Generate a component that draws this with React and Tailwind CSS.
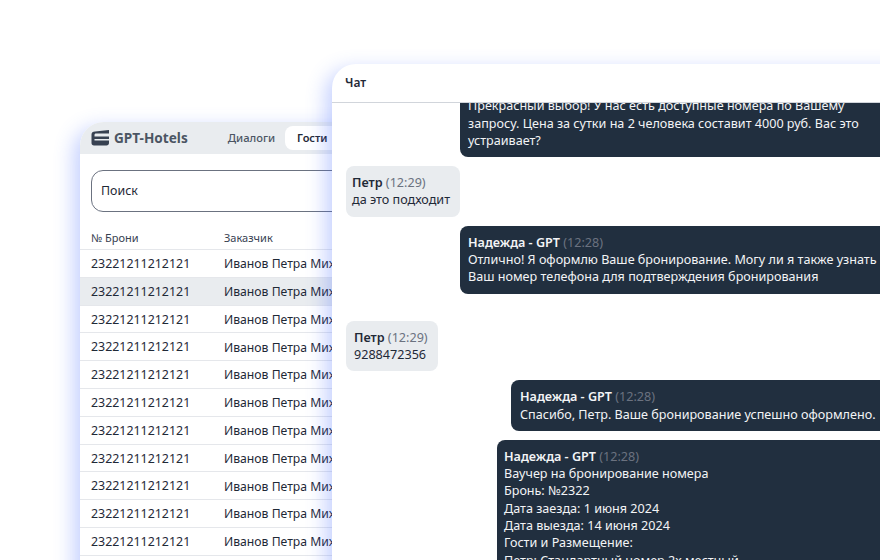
import React from "react";

const guests = Array.from({ length: 12 }, (_, i) => i);

const Logo = () => (
  <svg width="19" height="16" viewBox="0 0 19 16" className="shrink-0">
    <path d="M4 1.5L18 0V3.5H5C4 3.5 3.5 4 3.5 5V6.5H18V9H3.5V10.5H18V13C18 14.6 17 15.5 15.5 15.5H3C1.4 15.5 0.5 14.6 0.5 13V4.5C0.5 2.6 1.8 1.7 4 1.5Z" fill="#374151" />
  </svg>
);

const GuestRow = ({ active }) => (
  <div className={`flex h-[27.8px] shrink-0 items-center border-b border-[#e5e7eb] pl-[11px] pt-[2px] text-[#1f2937] ${active ? "bg-[#e9ecef]" : ""}`}>
    <span className="w-[133px] text-[12.4px]">23221211212121</span>
    <span className="whitespace-nowrap text-[12.2px]">Иванов Петра Михайловна</span>
  </div>
);

const GuestBubble = ({ time, text, className = "" }) => (
  <div className={`rounded-lg bg-[#e9ecef] py-2 text-[#1f2937] ${className}`}>
    <p>
      <b className="font-semibold">Петр</b> <span className="text-[#6b7280]">({time})</span>
    </p>
    <p>{text}</p>
  </div>
);

const BotBubble = ({ className = "", children }) => (
  <div className={`rounded-lg bg-[#212f3f] py-2 text-[#f3f4f6] ${className}`}>
    <p>
      <b className="font-semibold">Надежда - GPT</b> <span className="text-[#6b7280]">(12:28)</span>
    </p>
    {children}
  </div>
);

export default function App() {
  return (
    <div className="relative h-[560px] w-[880px] overflow-hidden bg-white font-['Noto_Sans',sans-serif]">
      {/* Guests window */}
      <div className="absolute left-[80px] top-[122px] flex h-[480px] w-[400px] flex-col overflow-hidden rounded-tl-3xl bg-white shadow-[-6px_6px_20px_rgba(70,110,255,0.32)]">
        <div className="flex h-[32px] shrink-0 items-center bg-[#e9ecef] pl-[11px]">
          <Logo />
          <span className="ml-[4px] text-[13.6px] font-bold text-[#4b5563]">GPT-Hotels</span>
          <span className="ml-[40px] text-[11.2px] font-medium text-[#4b5563]">Диалоги</span>
          <span className="ml-[10px] flex h-[24px] w-[60px] items-center rounded-lg bg-white pl-[12px] text-[11px] font-semibold text-[#1f2937]">Гости</span>
        </div>
        <div className="ml-[11px] mt-[16px] flex h-[42px] w-[300px] shrink-0 items-center rounded-xl border border-[#6b7280] pl-[9px] text-[12.4px] text-[#1f2937]">
          Поиск
        </div>
        <div className="mt-[20px] flex h-[18px] shrink-0 items-center border-b border-[#e5e7eb] pb-1 pl-[11px] text-[11px] text-[#374151]">
          <span className="w-[133px]">№ Брони</span>
          <span>Заказчик</span>
        </div>
        {guests.map((i) => (
          <GuestRow key={i} active={i === 1} />
        ))}
      </div>

      {/* Chat window */}
      <div className="absolute left-[332px] top-[64px] flex h-[520px] w-[580px] flex-col overflow-hidden rounded-tl-3xl bg-white text-[12.6px] leading-[17.3px] shadow-[-6px_6px_20px_rgba(70,110,255,0.32)]">
        <div className="flex h-[39px] shrink-0 items-center border-b border-[#d1d5db] pl-[13px] text-[12px] font-semibold text-[#1f2937]">
          Чат
        </div>
        <div className="min-h-0 flex-1 overflow-hidden pl-3.5">
          <BotBubble className="-mt-[31px] ml-[114px] w-[430px] pl-2">
            <p>Прекрасный выбор! У нас есть доступные номера по Вашему запросу. Цена за сутки на 2 человека составит 4000 руб. Вас это устраивает?</p>
          </BotBubble>
          <GuestBubble time="12:29" text="да это подходит" className="mt-[9px] w-[114px] pl-1.5" />
          <BotBubble className="mt-[9px] ml-[114px] w-[430px] pl-2">
            <p>Отлично! Я оформлю Ваше бронирование. Могу ли я также узнать Ваш номер телефона для подтверждения бронирования</p>
          </BotBubble>
          <GuestBubble time="12:29" text="9288472356" className="mt-[27px] w-[92px] pl-2" />
          <BotBubble className="mt-[9px] ml-[165px] w-[400px] pl-[9px]">
            <p>Спасибо, Петр. Ваше бронирование успешно оформлено.</p>
          </BotBubble>
          <BotBubble className="mt-[9px] ml-[151px] w-[420px] pl-[7px]">
            <p>Ваучер на бронирование номера</p>
            <p>Бронь: №2322</p>
            <p>Дата заезда: 1 июня 2024</p>
            <p>Дата выезда: 14 июня 2024</p>
            <p>Гости и Размещение:</p>
            <p>Петр: Стандартный номер 2х местный</p>
          </BotBubble>
        </div>
      </div>
    </div>
  );
}
